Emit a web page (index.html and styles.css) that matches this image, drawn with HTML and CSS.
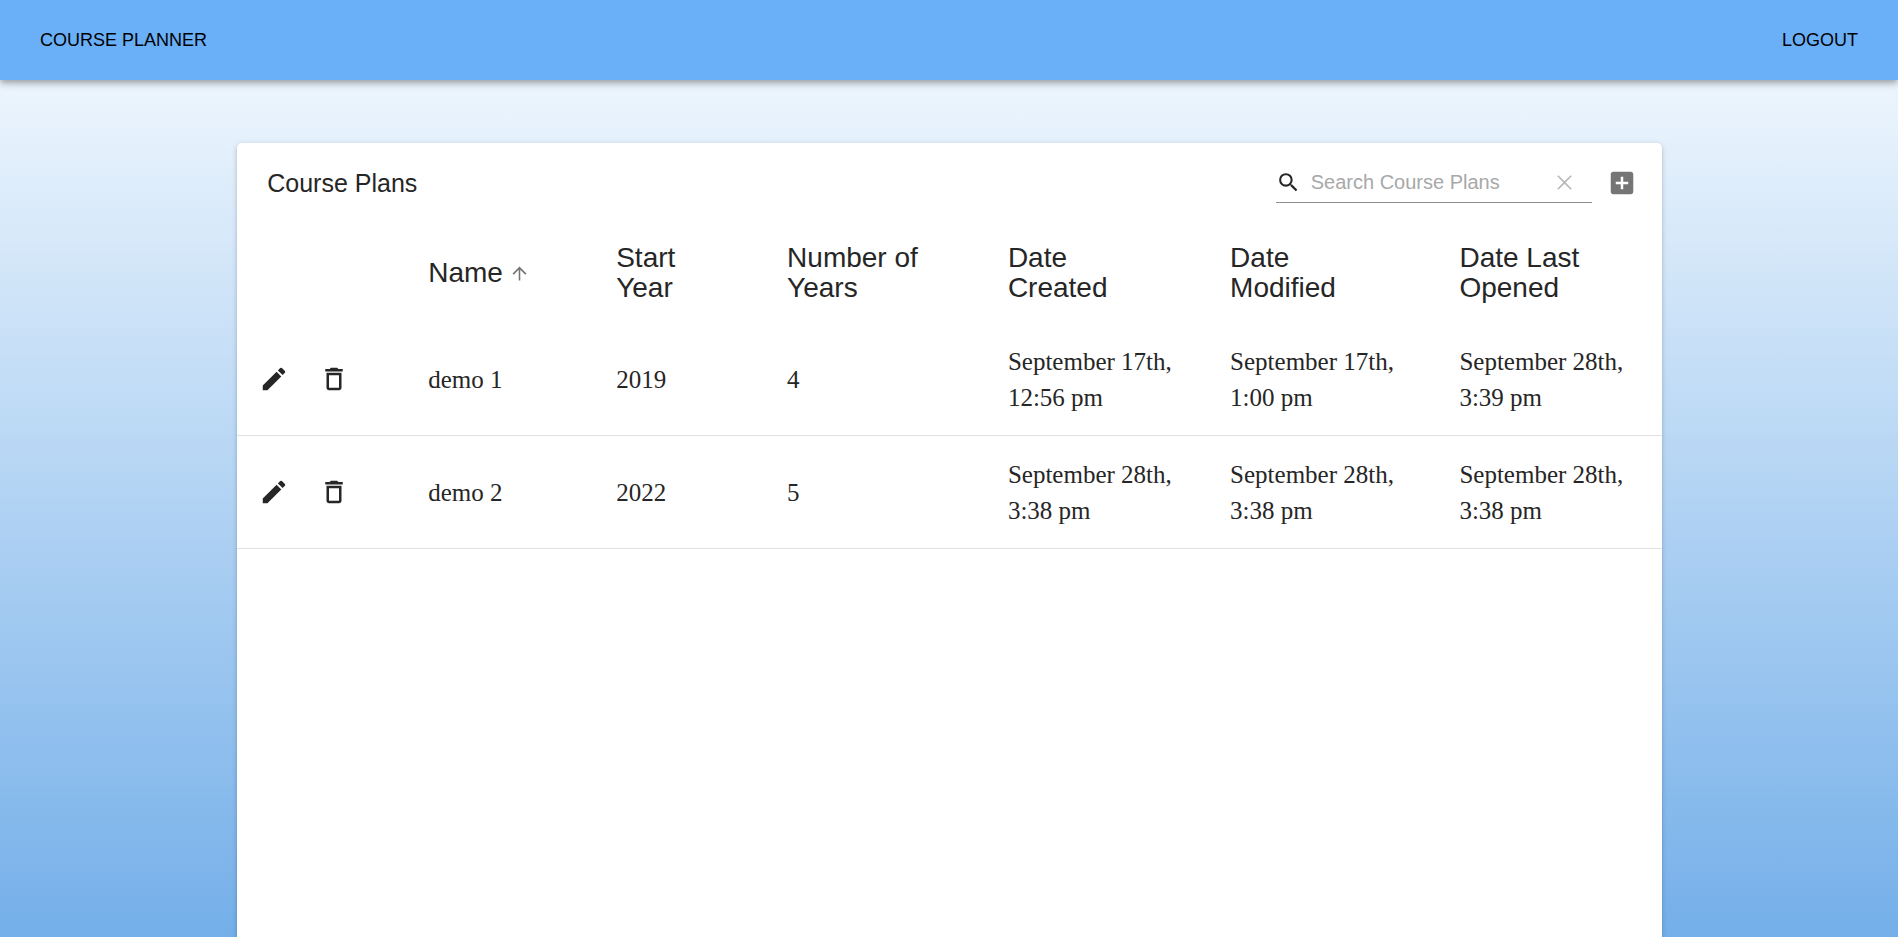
FILE: index.html
```html
<!DOCTYPE html>
<html lang="en">
<head>
<meta charset="utf-8">
<meta name="viewport" content="width=device-width, initial-scale=1">
<title>Course Planner</title>
<link rel="stylesheet" href="styles.css">
</head>
<body>
<header class="app-bar">
  <a class="nav-link" href="#">COURSE PLANNER</a>
  <button class="nav-link" type="button">LOGOUT</button>
</header>
<main class="card">
  <div class="toolbar">
    <h1 class="title">Course Plans</h1>
    <div class="search">
      <svg class="icon-small" viewBox="0 0 24 24" aria-hidden="true"><path d="M15.5 14h-.79l-.28-.27A6.471 6.471 0 0 0 16 9.5 6.5 6.5 0 1 0 9.5 16c1.61 0 3.09-.59 4.23-1.57l.27.28v.79l5 4.99L20.49 19l-4.99-5zm-6 0C7.01 14 5 11.99 5 9.5S7.01 5 9.5 5 14 7.01 14 9.5 11.99 14 9.5 14z"/></svg>
      <input class="search-input" type="text" placeholder="Search Course Plans" aria-label="Search Course Plans">
      <button class="clear-button" type="button" aria-label="Clear search" disabled>
        <svg class="icon-small" viewBox="0 0 24 24" aria-hidden="true"><path d="M19 6.1 17.9 5 12 10.9 6.1 5 5 6.1l5.9 5.9L5 17.900l1.100 1.100L12 13.100l5.900 5.900 1.100-1.100-5.900-5.900z"/></svg>
      </button>
    </div>
    <button class="add-button" type="button" aria-label="Add plan">
      <svg class="icon" viewBox="0 0 24 24" aria-hidden="true"><path d="M19 3H5c-1.110 0-2 .9-2 2v14c0 1.100.89 2 2 2h14c1.100 0 2-.9 2-2V5c0-1.100-.9-2-2-2zm-2 10h-4v4h-2v-4H7v-2h4V7h2v4h4v2z"/></svg>
    </button>
  </div>
  <table class="plans">
    <colgroup>
      <col class="col-actions"><col class="col-name"><col class="col-start"><col class="col-years"><col class="col-created"><col class="col-modified"><col class="col-opened">
    </colgroup>
    <thead>
      <tr>
        <td></td>
        <th scope="col" aria-sort="ascending"><button class="sort" type="button">Name
          <svg class="sort-icon" viewBox="0 0 24 24" aria-hidden="true"><path d="M4 12l1.410 1.410L11.100 7.700V20h1.800V7.700l5.690 5.710L20 12l-8-8z"/></svg></button></th>
        <th scope="col">Start Year</th>
        <th scope="col">Number of Years</th>
        <th scope="col">Date Created</th>
        <th scope="col">Date Modified</th>
        <th scope="col">Date Last Opened</th>
      </tr>
    </thead>
    <tbody>
      <tr>
        <td class="actions"><div class="action-group">
          <button class="icon-button" type="button" aria-label="Edit demo 1"><svg class="icon" viewBox="0 0 24 24" aria-hidden="true"><path d="M3 17.250V21h3.750L17.810 9.940l-3.750-3.750L3 17.250zM20.710 7.040a1 1 0 0 0 0-1.410l-2.340-2.340a1 1 0 0 0-1.410 0l-1.830 1.830 3.750 3.750 1.830-1.830z"/></svg></button>
          <button class="icon-button" type="button" aria-label="Delete demo 1"><svg class="icon" viewBox="0 0 24 24" aria-hidden="true"><path d="M6 19c0 1.100.9 2 2 2h8c1.100 0 2-.9 2-2V7H6v12zM8 9h8v10H8V9zm7.500-5-1-1h-5l-1 1H5v2h14V4h-3.500z"/></svg></button>
        </div></td>
        <td>demo 1</td>
        <td>2019</td>
        <td>4</td>
        <td>September 17th, 12:56 pm</td>
        <td>September 17th, 1:00 pm</td>
        <td>September 28th, 3:39 pm</td>
      </tr>
      <tr>
        <td class="actions"><div class="action-group">
          <button class="icon-button" type="button" aria-label="Edit demo 2"><svg class="icon" viewBox="0 0 24 24" aria-hidden="true"><path d="M3 17.250V21h3.750L17.810 9.940l-3.750-3.750L3 17.250zM20.710 7.040a1 1 0 0 0 0-1.410l-2.340-2.340a1 1 0 0 0-1.410 0l-1.830 1.830 3.750 3.750 1.830-1.830z"/></svg></button>
          <button class="icon-button" type="button" aria-label="Delete demo 2"><svg class="icon" viewBox="0 0 24 24" aria-hidden="true"><path d="M6 19c0 1.100.9 2 2 2h8c1.100 0 2-.9 2-2V7H6v12zM8 9h8v10H8V9zm7.500-5-1-1h-5l-1 1H5v2h14V4h-3.500z"/></svg></button>
        </div></td>
        <td>demo 2</td>
        <td>2022</td>
        <td>5</td>
        <td>September 28th, 3:38 pm</td>
        <td>September 28th, 3:38 pm</td>
        <td>September 28th, 3:38 pm</td>
      </tr>
    </tbody>
  </table>
</main>
</body>
</html>
```

FILE: styles.css
```css
* {
  box-sizing: border-box;
}

body {
  margin: 0;
  min-height: 100vh;
  display: flex;
  flex-direction: column;
  font-family: "Liberation Sans", Arial, sans-serif;
  color: #262626;
  background: linear-gradient(#f8fcff, #74afe9);
}

button {
  padding: 0;
  border: 0;
  background: none;
  color: inherit;
  font: inherit;
  cursor: pointer;
}

svg {
  display: block;
  flex: none;
  fill: currentColor;
}

.app-bar {
  display: flex;
  align-items: center;
  justify-content: space-between;
  height: 80px;
  padding: 0 40px;
  background: #6ab0f9;
  box-shadow: 0 2px 5px -1px rgba(0, 0, 0, 0.2), 0 5px 6px rgba(0, 0, 0, 0.14), 0 1px 12px rgba(0, 0, 0, 0.12);
}

.nav-link {
  color: #000;
  font-size: 18px;
  text-decoration: none;
}

.card {
  flex: 1;
  margin: 63px 12.45% 0 12.5%;
  background: #fff;
  border-radius: 5px 5px 0 0;
  box-shadow: 0 4px 1px -2px rgba(0, 0, 0, 0.2), 0 2px 3px rgba(0, 0, 0, 0.14), 0 1px 6px rgba(0, 0, 0, 0.12);
}

.toolbar {
  display: flex;
  align-items: center;
  height: 80px;
  padding: 0 25px 0 30px;
}

.title {
  margin: 0 auto 0 0;
  font-size: 25px;
  font-weight: 400;
}

.search {
  display: flex;
  align-items: center;
  width: 316px;
  height: 40px;
  border-bottom: 1px solid #8c8c8c;
}

.search-input {
  flex: 1;
  min-width: 0;
  padding: 0;
  margin-left: 10px;
  border: 0;
  outline: 0;
  background: none;
  color: inherit;
  font: 20px "Liberation Sans", Arial, sans-serif;
}

.search-input::placeholder {
  color: #a8a8a8;
  opacity: 1;
}

.clear-button {
  padding: 0 15px;
  color: #b8b8b8;
}

.add-button {
  margin-left: 15px;
  color: #757575;
}

.icon {
  width: 30px;
  height: 30px;
}

.icon-small {
  width: 25px;
  height: 25px;
}

.plans {
  width: 100%;
  table-layout: fixed;
  border-collapse: separate;
  border-spacing: 0;
}

.col-actions { width: 12%; }
.col-name { width: 13.2%; }
.col-start { width: 12%; }
.col-years { width: 15.5%; }
.col-created { width: 15.6%; }
.col-modified { width: 16.1%; }
.col-opened { width: 15.6%; }

.plans th {
  padding: 20px 40px 20px 20px;
  height: 100px;
  font-size: 28px;
  font-weight: 400;
  line-height: 30px;
  text-align: left;
}

.sort {
  display: flex;
  align-items: center;
  gap: 6px;
}

.sort-icon {
  width: 21px;
  height: 21px;
  color: #757575;
}

.plans tbody td {
  padding: 21px 20px 19px;
  border-bottom: 1px solid #e0e0e0;
  font-family: "Liberation Serif", "Times New Roman", serif;
  font-size: 25px;
  line-height: 36px;
}

.plans tbody .actions {
  padding: 0 7px;
}

.action-group {
  display: flex;
}

.icon-button {
  padding: 15px;
}
```
